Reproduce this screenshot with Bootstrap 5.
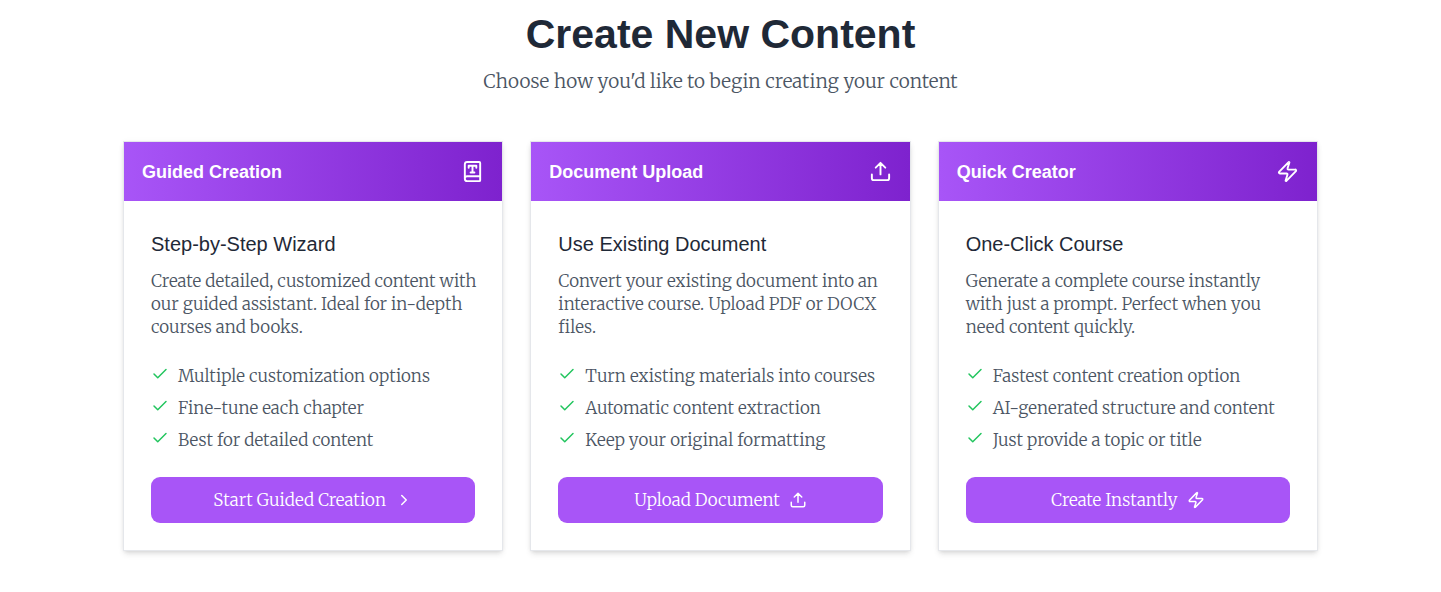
<!DOCTYPE html>
<html lang="en">
<head>
<meta charset="utf-8">
<meta name="viewport" content="width=device-width, initial-scale=1">
<title>Create New Content</title>
<link rel="stylesheet" href="https://cdn.jsdelivr.net/npm/bootstrap@5.3.0/dist/css/bootstrap.min.css">
<style>
  body { font-family: Merriweather, "DejaVu Serif Condensed", "DejaVu Serif", serif; font-size: 17px; line-height: 23px; font-weight: 300; color: #4b5563; background: #fff; }
  h1, h2, h3 { font-family: "Liberation Sans", Arial, sans-serif; color: #1f2937; }
  .page { max-width: 1223px; padding: 9px 14px 40px; }
  .page-title { font-size: 41px; line-height: 50px; font-weight: 700; }
  .page-lead { font-size: 19px; line-height: 28px; margin: 8px 0 46px; }
  .options { --bs-gutter-x: 27px; --bs-gutter-y: 27px; }
  .option { border: 1px solid #e5e7eb; border-radius: 0; box-shadow: 0 4px 6px -1px rgba(0,0,0,.1), 0 2px 4px -2px rgba(0,0,0,.1), 0 0 6px rgba(0,0,0,.03); color: inherit; }
  .option-head { background: linear-gradient(to right, #a855f7, #7e22ce); padding: 18px; color: #fff; }
  .option-head h2 { font-size: 18px; line-height: 21px; padding-top: 2px; font-weight: 700; color: #fff; }
  .option-body { padding: 29px 27px 27px; }
  .option-body h3 { font-size: 20px; line-height: 28px; font-weight: 400; margin-bottom: 12px; }
  .option-body p { margin: 0 -4px 26px 0; }
  .checks { gap: 9px; margin-bottom: 25px; }
  .checks li { gap: 9px; }
  .tick { color: #22c55e; }
  .ico { fill: none; stroke: currentColor; stroke-width: 2; stroke-linecap: round; stroke-linejoin: round; flex: none; }
  .go { --bs-btn-color: #fff; --bs-btn-bg: #a855f7; --bs-btn-hover-color: #fff; --bs-btn-hover-bg: #9333ea; --bs-btn-active-bg: #7e22ce; --bs-btn-active-color: #fff; --bs-btn-font-weight: 300; --bs-btn-border-width: 0; height: 46px; border-radius: 9px; font-size: 17px; line-height: 23px; gap: 9px; }
</style>
</head>
<body>
<svg class="d-none" aria-hidden="true">
  <symbol id="booktype" viewBox="0 0 24 24"><path d="M4 19.500v-15A2.500 2.500 0 0 1 6.500 2H19a1 1 0 0 1 1 1v18a1 1 0 0 1-1 1H6.500a1 1 0 0 1 0-5H20"/><path d="M10 13h4M12 6v7M16 8V6H8v2"/></symbol>
  <symbol id="upload" viewBox="0 0 24 24"><path d="M21 15v4a2 2 0 0 1-2 2H5a2 2 0 0 1-2-2v-4M17 8l-5-5-5 5M12 3v12"/></symbol>
  <symbol id="zap" viewBox="0 0 24 24"><path d="M4 14a1 1 0 0 1-.78-1.630l9.900-10.200a.5.5 0 0 1 .86.460l-1.920 6.020A1 1 0 0 0 13 10h7a1 1 0 0 1 .78 1.630l-9.900 10.200a.5.5 0 0 1-.86-.460l1.920-6.020A1 1 0 0 0 11 14z"/></symbol>
  <symbol id="check" viewBox="0 0 24 24"><path d="M20 6 9 17l-5-5"/></symbol>
  <symbol id="chevron" viewBox="0 0 24 24"><path d="m9 18 6-6-6-6"/></symbol>
</svg>
<main class="page container-fluid">
  <header class="text-center">
    <h1 class="page-title mb-0">Create New Content</h1>
    <p class="page-lead">Choose how you'd like to begin creating your content</p>
  </header>
  <div class="row row-cols-1 row-cols-lg-3 options">
    <div class="col">
      <section class="card option h-100">
        <div class="option-head d-flex align-items-center justify-content-between">
          <h2 class="mb-0">Guided Creation</h2>
          <svg class="ico" width="23" height="23" aria-hidden="true"><use href="#booktype"/></svg>
        </div>
        <div class="option-body d-flex flex-column flex-grow-1">
          <h3>Step-by-Step Wizard</h3>
          <p>Create detailed, customized content with our guided assistant. Ideal for in-depth courses and books.</p>
          <ul class="checks list-unstyled d-flex flex-column">
            <li class="d-flex align-items-start"><svg class="ico tick" width="18" height="18" aria-hidden="true"><use href="#check"/></svg>Multiple customization options</li>
            <li class="d-flex align-items-start"><svg class="ico tick" width="18" height="18" aria-hidden="true"><use href="#check"/></svg>Fine-tune each chapter</li>
            <li class="d-flex align-items-start"><svg class="ico tick" width="18" height="18" aria-hidden="true"><use href="#check"/></svg>Best for detailed content</li>
          </ul>
          <button type="button" class="btn go w-100 mt-auto d-flex align-items-center justify-content-center">Start Guided Creation <svg class="ico" width="18" height="18" aria-hidden="true"><use href="#chevron"/></svg></button>
        </div>
      </section>
    </div>
    <div class="col">
      <section class="card option h-100">
        <div class="option-head d-flex align-items-center justify-content-between">
          <h2 class="mb-0">Document Upload</h2>
          <svg class="ico" width="23" height="23" aria-hidden="true"><use href="#upload"/></svg>
        </div>
        <div class="option-body d-flex flex-column flex-grow-1">
          <h3>Use Existing Document</h3>
          <p>Convert your existing document into an interactive course. Upload PDF or DOCX files.</p>
          <ul class="checks list-unstyled d-flex flex-column">
            <li class="d-flex align-items-start"><svg class="ico tick" width="18" height="18" aria-hidden="true"><use href="#check"/></svg>Turn existing materials into courses</li>
            <li class="d-flex align-items-start"><svg class="ico tick" width="18" height="18" aria-hidden="true"><use href="#check"/></svg>Automatic content extraction</li>
            <li class="d-flex align-items-start"><svg class="ico tick" width="18" height="18" aria-hidden="true"><use href="#check"/></svg>Keep your original formatting</li>
          </ul>
          <button type="button" class="btn go w-100 mt-auto d-flex align-items-center justify-content-center">Upload Document <svg class="ico" width="18" height="18" aria-hidden="true"><use href="#upload"/></svg></button>
        </div>
      </section>
    </div>
    <div class="col">
      <section class="card option h-100">
        <div class="option-head d-flex align-items-center justify-content-between">
          <h2 class="mb-0">Quick Creator</h2>
          <svg class="ico" width="23" height="23" aria-hidden="true"><use href="#zap"/></svg>
        </div>
        <div class="option-body d-flex flex-column flex-grow-1">
          <h3>One-Click Course</h3>
          <p>Generate a complete course instantly with just a prompt. Perfect when you need content quickly.</p>
          <ul class="checks list-unstyled d-flex flex-column">
            <li class="d-flex align-items-start"><svg class="ico tick" width="18" height="18" aria-hidden="true"><use href="#check"/></svg>Fastest content creation option</li>
            <li class="d-flex align-items-start"><svg class="ico tick" width="18" height="18" aria-hidden="true"><use href="#check"/></svg>AI-generated structure and content</li>
            <li class="d-flex align-items-start"><svg class="ico tick" width="18" height="18" aria-hidden="true"><use href="#check"/></svg>Just provide a topic or title</li>
          </ul>
          <button type="button" class="btn go w-100 mt-auto d-flex align-items-center justify-content-center">Create Instantly <svg class="ico" width="18" height="18" aria-hidden="true"><use href="#zap"/></svg></button>
        </div>
      </section>
    </div>
  </div>
</main>
<script src="https://cdn.jsdelivr.net/npm/bootstrap@5.3.0/dist/js/bootstrap.bundle.min.js"></script>
</body>
</html>
